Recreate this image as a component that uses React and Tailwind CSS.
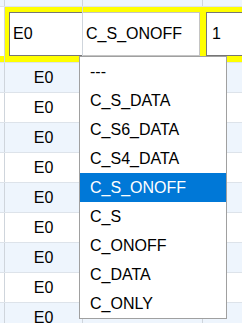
import React from "react";

const options = [
  "---",
  "C_S_DATA",
  "C_S6_DATA",
  "C_S4_DATA",
  "C_S_ONOFF",
  "C_S",
  "C_ONOFF",
  "C_DATA",
  "C_ONLY",
];

const rows = Array.from({ length: 9 }, (_, i) => i);

const App = () => {
  return (
    <div className="relative w-[242px] h-[323px] overflow-hidden bg-white font-['Liberation_Sans',Arial,sans-serif] text-[16px] text-black">
      {/* slice of the row above */}
      <div className="flex h-[7px] bg-[#eef5fd] border-b border-[#dde3ea]">
        <div className="w-[4px]" />
        <div className="w-[78px] border-l border-[#cfd5dc]" />
        <div className="w-[120px] border-l border-[#cfd5dc]" />
        <div className="flex-1 border-l border-[#cfd5dc]" />
      </div>

      {/* row being edited */}
      <div className="flex h-[55px]">
        <div className="w-[4px] bg-white border-b-[6px] border-[#ffff00]" />
        <div className="w-[78px] border-l border-[#cfd5dc] bg-[#ffff00] pl-[4px] pt-[5px] pb-[6px]">
          <div className="h-full flex items-center pl-[3px] bg-white border-l border-t border-b border-[#767676]">
            E0
          </div>
        </div>
        <div className="w-[120px] border-l border-[#cfd5dc] bg-[#ffff00] pt-[5px] pb-[6px] pr-[2px]">
          <div className="h-full flex items-center pl-[3px] bg-white border-t border-b border-r border-[#c4c4c4]">
            C_S_ONOFF
          </div>
        </div>
        <div className="flex-1 bg-[#ffff00] pl-[4px] pt-[5px] pb-[6px]">
          <div className="h-full flex items-center pl-[5px] bg-white border-l border-t border-b border-[#767676]">
            1
          </div>
        </div>
      </div>

      {/* data rows */}
      {rows.map((i) => (
        <div
          key={i}
          className={`flex h-[30px] border-t border-[#dde3ea] ${
            i % 2 === 0 ? "bg-[#eef5fd]" : "bg-white"
          }`}
        >
          <div className="w-[4px]" />
          <div className="w-[78px] border-l border-[#cfd5dc] flex items-center justify-center">
            E0
          </div>
          <div className="w-[120px] border-l border-[#cfd5dc]" />
          <div className="flex-1 border-l border-[#cfd5dc]" />
        </div>
      ))}

      {/* open select list */}
      <div className="absolute left-[79px] top-[56px] w-[148px] bg-white border border-[#a0a0a0]">
        {options.map((opt) => (
          <div
            key={opt}
            className={`h-[29px] flex items-center pl-[10px] ${
              opt === "C_S_ONOFF" ? "bg-[#0078d7] text-white" : ""
            }`}
          >
            {opt}
          </div>
        ))}
      </div>
    </div>
  );
};

export default App;
